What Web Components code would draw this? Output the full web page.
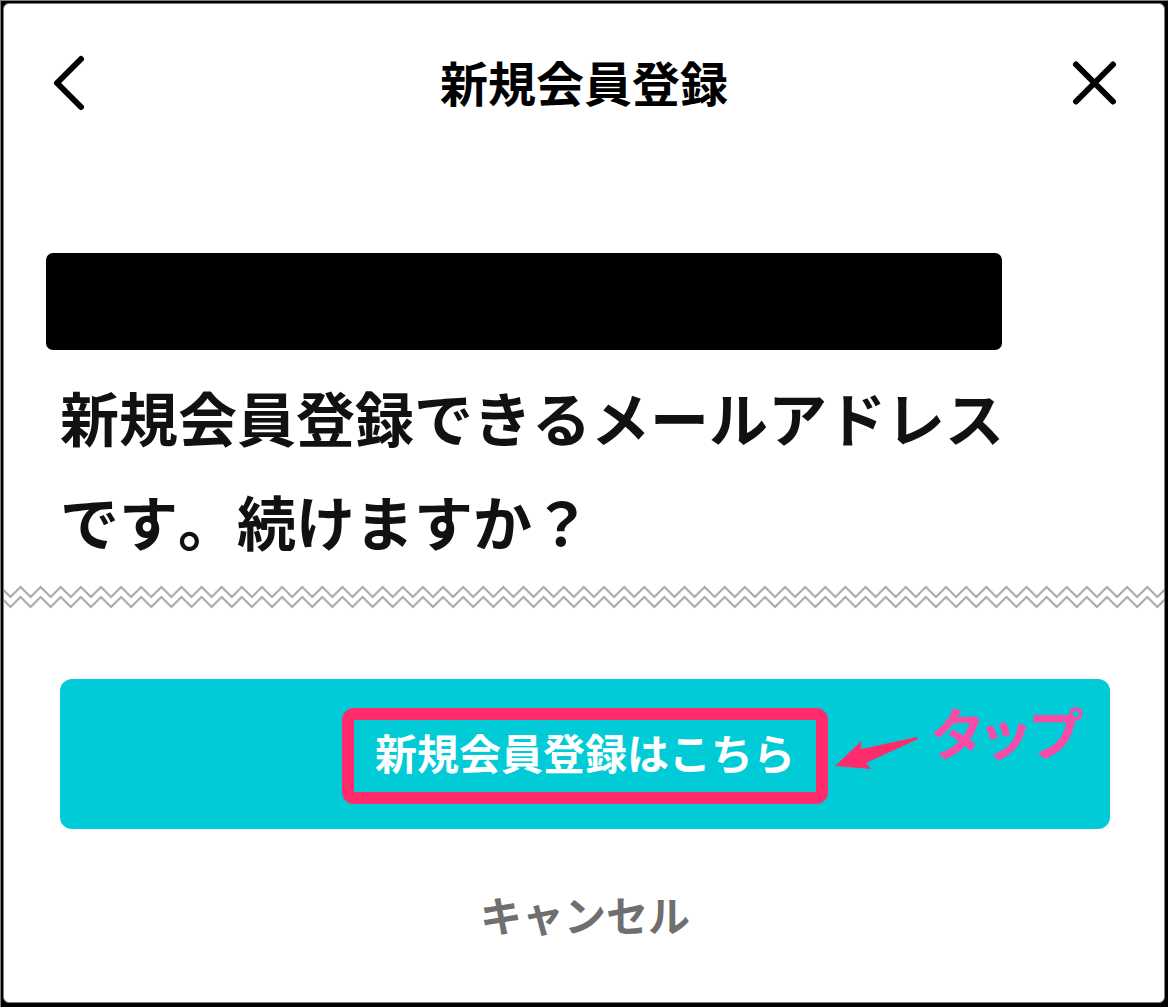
<!DOCTYPE html>
<html lang="ja">
<head>
<meta charset="utf-8">
<meta name="viewport" content="width=device-width, initial-scale=1">
<title>新規会員登録</title>
<style>
  body {
    background: #000;
    font-family: "Noto Sans CJK JP", sans-serif;
    font-kerning: none;
    font-weight: 700;
    margin: 0;
  }
</style>
</head>
<body>

<sign-up-dialog>
  <dialog-header slot="header">新規会員登録</dialog-header>
  <masked-address></masked-address>
  <confirm-message>新規会員登録できるメールアドレスです。続けますか？</confirm-message>
  <wave-divider slot="divider"></wave-divider>
  <primary-action slot="actions">
    新規会員登録はこちら
    <tap-hint slot="hint">タップ</tap-hint>
  </primary-action>
  <cancel-action slot="actions">キャンセル</cancel-action>
</sign-up-dialog>

<script>
/* === BASE ===================================================================================== */

class BaseElement extends HTMLElement {
  css = () => '';
  html = () => '';

  render() {
    this.shadowRoot.innerHTML = `
      <style>*, *::before, *::after { box-sizing: border-box; } ${this.css().trim()}</style>
      ${this.html().trim()}
    `;
  }

  connectedCallback() {
    if (!this.shadowRoot) this.attachShadow({ mode: 'open' });
    this.render();
  }
}

/* === COMPONENTS =============================================================================== */

//========//
// DIALOG //
//========//

class SignUpDialog extends BaseElement {
  css = () => /* css */ `

    :host {
      border-left: 1px solid #7d827d;
      border-top: 1px solid #7d827d;
      box-sizing: border-box;
      display: flex;
      min-height: 100vh;
      padding: 2px 3px 4px 2px;
    }

    main {
      background: #fff;
      border: 1px solid #7d827d;
      border-radius: 6px;
      display: flex;
      flex: 1;
      flex-direction: column;
      min-width: 0;
    }

    .body {
      padding: 86px 40px 12px 42px;
    }

    .actions {
      align-items: center;
      display: flex;
      flex-direction: column;
      gap: 54px;
      padding: 70px 54px 54px 56px;
    }

  `;

  html = () => /* html */ `
    <main>
      <slot name="header"></slot>
      <div class="body"><slot></slot></div>
      <slot name="divider"></slot>
      <div class="actions"><slot name="actions"></slot></div>
    </main>
  `;
}

customElements.define('sign-up-dialog', SignUpDialog);

//========//
// HEADER //
//========//

class DialogHeader extends BaseElement {
  css = () => /* css */ `

    :host {
      display: block;
    }

    header {
      align-items: center;
      color: #000;
      display: flex;
      height: 163px;
      justify-content: space-between;
      padding: 0 40px 5px;
    }

    h1 {
      font-size: 48px;
      line-height: 72px;
      margin: 0;
      padding-bottom: 4px;
    }

    button {
      background: none;
      border: 0;
      color: inherit;
      display: block;
      height: 60px;
      padding: 0;
      width: 60px;
    }

    svg {
      display: block;
      fill: none;
      stroke: currentColor;
      stroke-linecap: round;
      stroke-linejoin: round;
      stroke-width: 6;
    }

  `;

  html = () => /* html */ `
    <header>
      <button type="button" aria-label="戻る">
        <svg width="60" height="60" viewBox="0 0 60 60"><path d="M37 6 13 30 37 54"/></svg>
      </button>
      <h1><slot></slot></h1>
      <button type="button" aria-label="閉じる">
        <svg width="60" height="60" viewBox="0 0 60 60"><path d="M12 11.500 49 48.500M49 11.500 12 48.500"/></svg>
      </button>
    </header>
  `;
}

customElements.define('dialog-header', DialogHeader);

//================//
// MASKED ADDRESS //
//================//

class MaskedAddress extends BaseElement {
  css = () => /* css */ `

    :host {
      background: #000;
      border-radius: 7px;
      display: block;
      height: 97px;
      margin-right: 122px;
    }

  `;
}

customElements.define('masked-address', MaskedAddress);

//=================//
// CONFIRM MESSAGE //
//=================//

class ConfirmMessage extends BaseElement {
  css = () => /* css */ `

    :host {
      color: #111;
      display: block;
    }

    p {
      font-size: 59px;
      line-height: 104px;
      margin: 15px 0 0;
      padding: 0 100px 0 14px;
    }

  `;

  html = () => /* html */ `<p><slot></slot></p>`;
}

customElements.define('confirm-message', ConfirmMessage);

//==============//
// WAVE DIVIDER //
//==============//

class WaveDivider extends BaseElement {
  css = () => /* css */ `

    :host {
      display: block;
      height: 24px;
    }

    svg {
      display: block;
    }

  `;

  html = () => /* html */ `
    <svg width="100%" height="24" aria-hidden="true">
      <defs>
        <pattern id="wave" x="6.46" width="20.12" height="24" patternUnits="userSpaceOnUse">
          <path d="M-10.06 2 0 12 10.06 2 20.12 12 30.18 2M-10.06 12 0 22 10.06 12 20.12 22 30.18 12" fill="none" stroke="#a9a9a9" stroke-width="2"/>
        </pattern>
      </defs>
      <rect width="100%" height="24" fill="url(#wave)"/>
    </svg>
  `;
}

customElements.define('wave-divider', WaveDivider);

//================//
// PRIMARY ACTION //
//================//

class PrimaryAction extends BaseElement {
  css = () => /* css */ `

    :host {
      align-self: stretch;
      display: block;
      position: relative;
    }

    button {
      background: #00cbd7;
      border: 0;
      border-radius: 12px;
      color: #fff;
      display: block;
      font: inherit;
      font-kerning: inherit;
      font-size: 42px;
      line-height: 62px;
      padding: 42px 0 46px;
      width: 100%;
    }

    .label {
      display: inline-block;
      position: relative;
    }

    /* marker drawn round the label */
    .label::after {
      border: 12px solid #ff2b6b;
      border-radius: 12px;
      content: '';
      inset: -13px -33px -21px;
      position: absolute;
    }

    ::slotted([slot="hint"]) {
      left: calc(50% + 250px);
      position: absolute;
      top: 8px;
    }

  `;

  html = () => /* html */ `
    <button type="button"><span class="label"><slot></slot></span></button>
    <slot name="hint"></slot>
  `;
}

customElements.define('primary-action', PrimaryAction);

//==========//
// TAP HINT //
//==========//

class TapHint extends BaseElement {
  css = () => /* css */ `

    :host {
      align-items: flex-start;
      color: #f74ba5;
      display: flex;
      gap: 12px;
      pointer-events: none;
    }

    svg {
      display: block;
      margin-top: 48px;
    }

    span {
      font-feature-settings: "palt";
      font-kerning: normal;
      font-size: 56px;
      line-height: 88px;
      white-space: nowrap;
    }

  `;

  html = () => /* html */ `
    <svg width="84" height="36" viewBox="0 0 84 36" aria-hidden="true">
      <path d="M0 31 26.5 6 26 14 82 2Q84 3 82 4.500L31 28 36 34Z" fill="#ff2b6b"/>
    </svg>
    <span><slot></slot></span>
  `;
}

customElements.define('tap-hint', TapHint);

//===============//
// CANCEL ACTION //
//===============//

class CancelAction extends BaseElement {
  css = () => /* css */ `

    :host {
      display: block;
    }

    button {
      background: none;
      border: 0;
      color: #6f6f6f;
      display: block;
      font: inherit;
      font-size: 42px;
      line-height: 62px;
      padding: 0;
    }

  `;

  html = () => /* html */ `<button type="button"><slot></slot></button>`;
}

customElements.define('cancel-action', CancelAction);
</script>
</body>
</html>
